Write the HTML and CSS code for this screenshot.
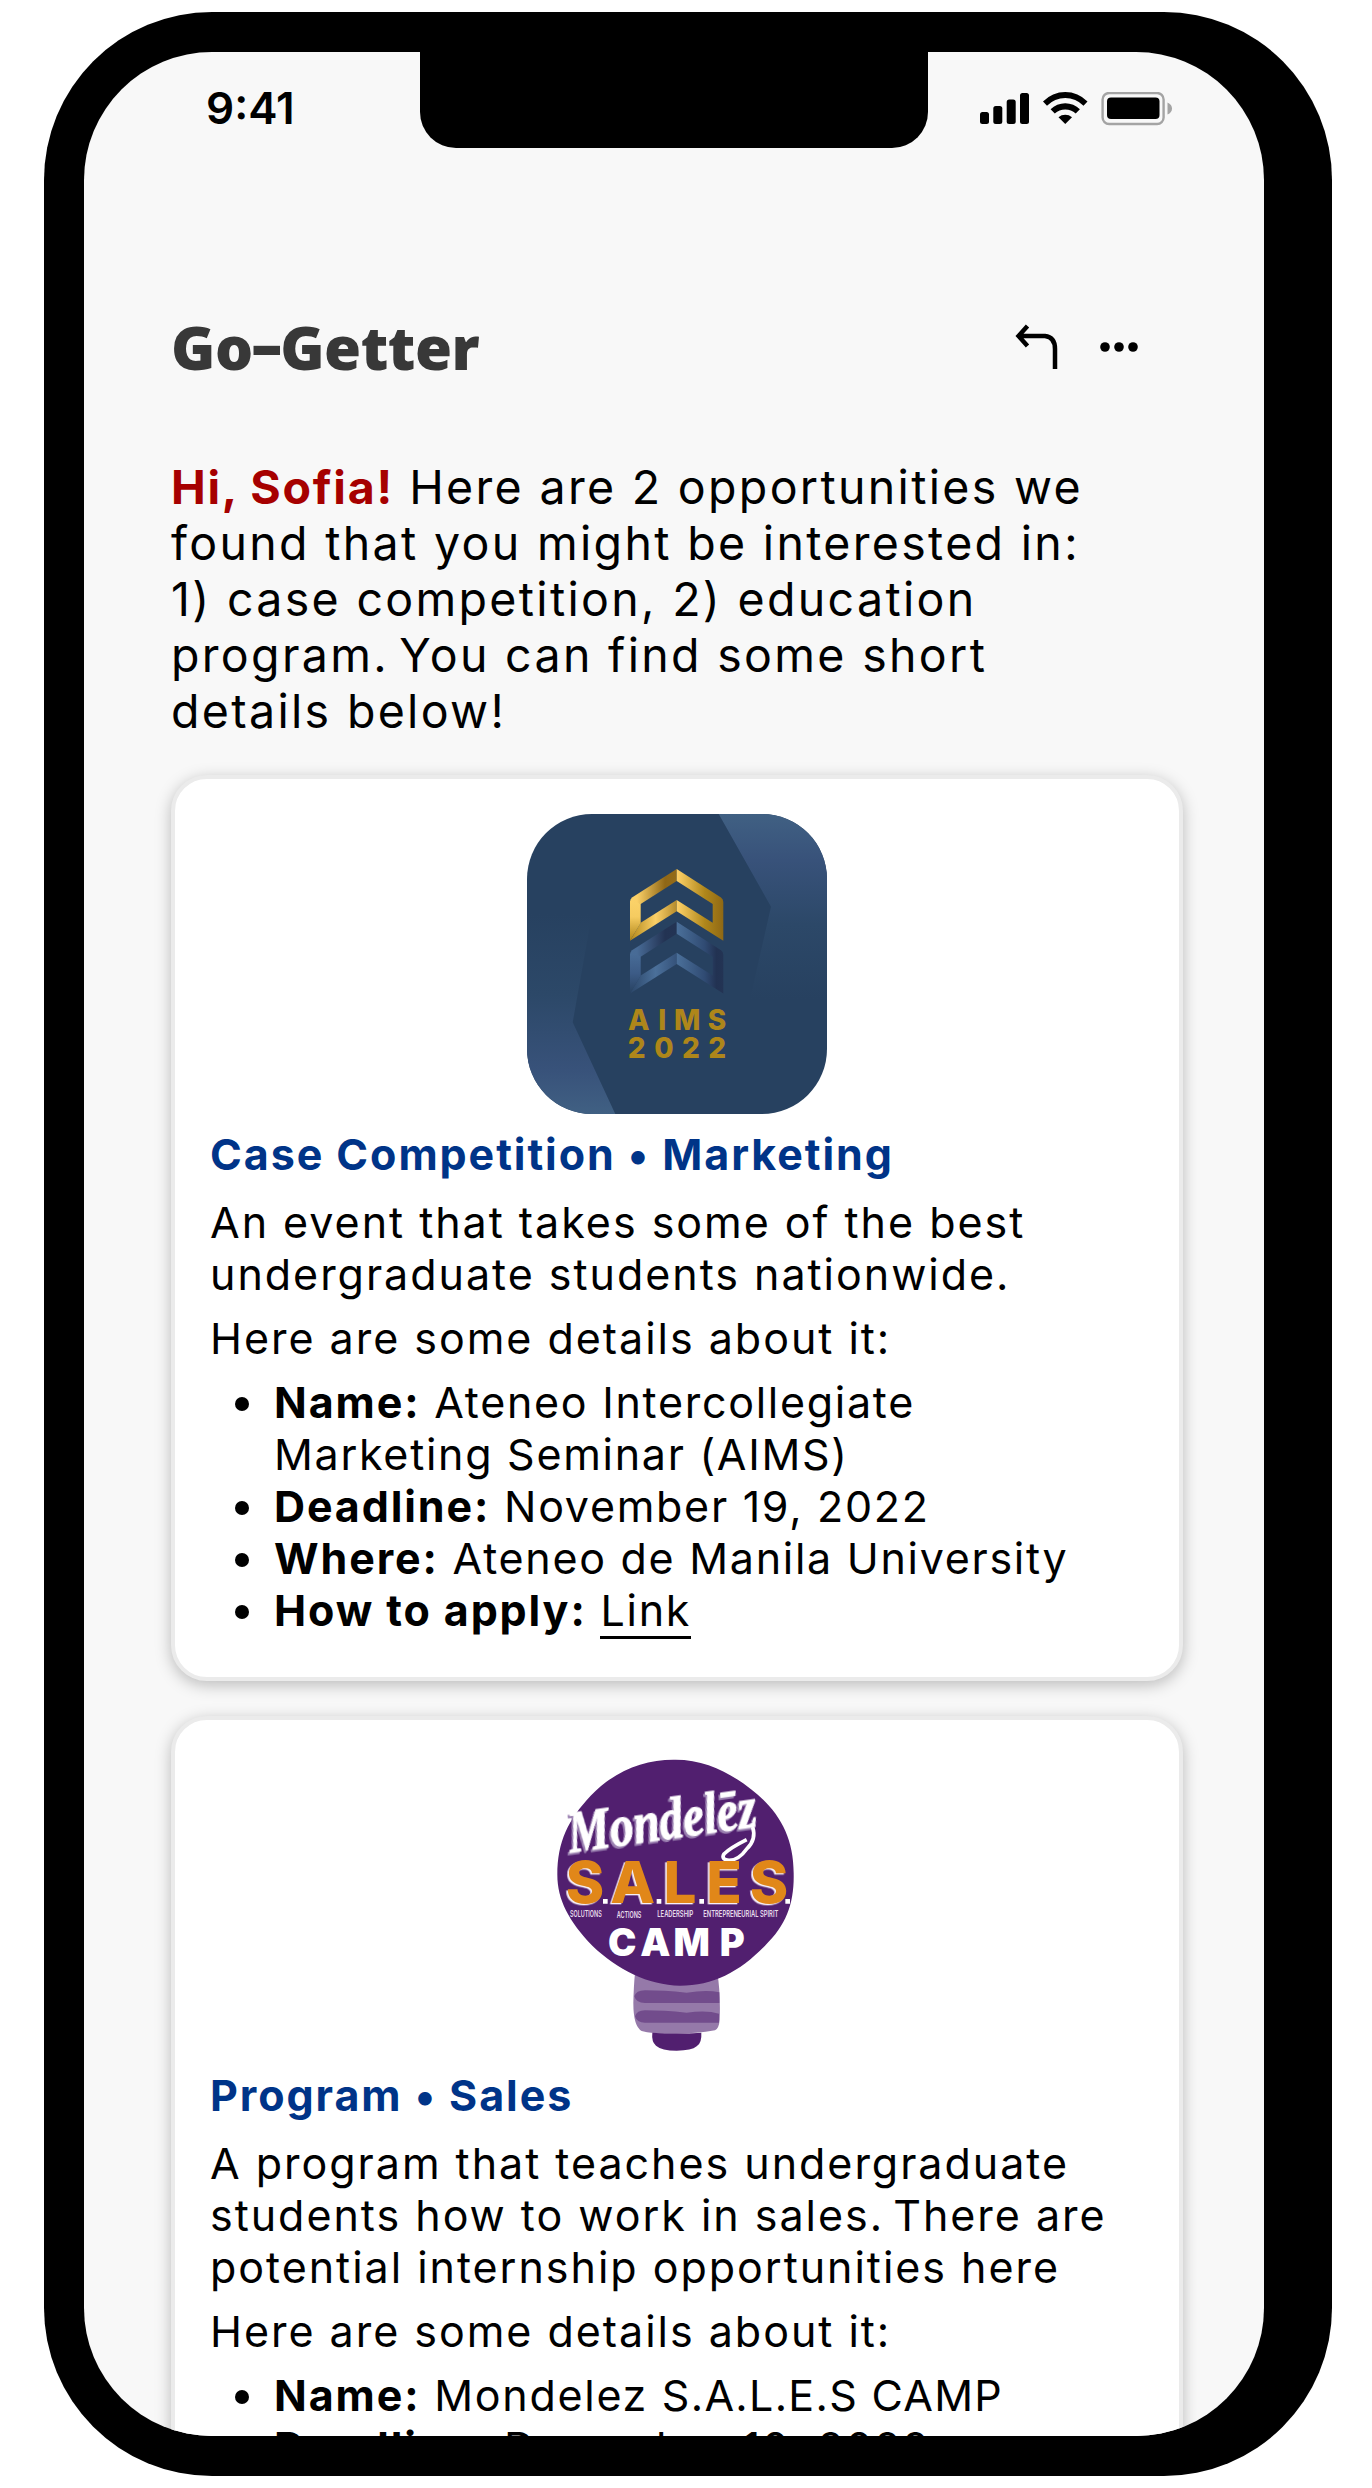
FILE: index.html
```html
<!DOCTYPE html>
<html lang="en">
<head>
<meta charset="utf-8">
<title>Go-Getter</title>
<link rel="stylesheet" href="styles.css">
</head>
<body>
<div class="phone">
  <div class="screen">
    <div class="status">
      <div class="time">9:41</div>
      <div class="notch"></div>
      <svg class="indicators" width="194" height="34" viewBox="0 0 194 34">
        <rect x="0" y="20" width="9" height="12" rx="2.5"/>
        <rect x="13.3" y="14" width="9" height="18" rx="2.5"/>
        <rect x="26.7" y="7.5" width="9" height="24.5" rx="2.5"/>
        <rect x="40" y="1" width="9" height="31" rx="2.5"/>
        <path d="M63 9.500a31 31 0 0 1 44.500 0l-4 4.200a25.500 25.500 0 0 0 -36.500 0z"/>
        <path d="M70.600 17.200a21 21 0 0 1 29.300 0l-4.200 4.300a15.500 15.500 0 0 0 -20.900 0z"/>
        <path d="M78.500 25.200a10.500 10.500 0 0 1 13.500 0l-6.750 6.800z"/>
        <rect x="122.600" y="1" width="61" height="31" rx="6.500" fill="none" stroke="#a4a4a4" stroke-width="2.400"/>
        <rect x="127" y="5.500" width="52.500" height="21.500" rx="4"/>
        <path d="M187.500 10.500q4.500 2 4.500 6t-4.500 6z" fill="#a4a4a4"/>
      </svg>
    </div>
    <header class="header">
      <h1 class="brand">Go<span class="dash">-</span>Getter</h1>
      <svg class="icon-back" width="44" height="46" viewBox="0 0 44 46" fill="none" stroke="#000" stroke-width="4.500"><path d="M12.500 2L3.500 12l9 10M4 12h26q10 1 10 13v20"/></svg>
      <svg class="icon-more" width="40" height="10" viewBox="0 0 40 10"><circle cx="6" cy="5" r="4.800"/><circle cx="20" cy="5" r="4.800"/><circle cx="34" cy="5" r="4.800"/></svg>
    </header>
    <p class="intro"><b class="greeting">Hi, Sofia!</b> Here are 2 opportunities we<br>found that you might be interested in:<br>1) case competition, 2) education<br>program.<span class="snug"> </span>You can find some short<br>details below!</p>

    <article class="card">
      <svg class="logo" width="300" height="300" viewBox="0 0 300 300">
        <defs>
          <clipPath id="tile"><rect width="300" height="300" rx="65"/></clipPath>
          <linearGradient id="fadeDown" x1="0" y1="0" x2="0" y2="1"><stop offset="0" stop-color="#406083"/><stop offset=".25" stop-color="#38527a"/><stop offset=".6" stop-color="#2c4868"/><stop offset="1" stop-color="#274160"/></linearGradient>
          <linearGradient id="fadeUp" x1="0" y1="1" x2="0" y2="0"><stop offset="0" stop-color="#406083"/><stop offset=".22" stop-color="#38527a"/><stop offset=".6" stop-color="#2c4868"/><stop offset="1" stop-color="#274160"/></linearGradient>
          <linearGradient id="gTop"><stop offset="0" stop-color="#fbd269"/><stop offset=".15" stop-color="#fbd067"/><stop offset=".75" stop-color="#906716"/><stop offset="1" stop-color="#936b19"/></linearGradient>
          <linearGradient id="gLow"><stop offset="0" stop-color="#b18719"/><stop offset=".55" stop-color="#fbd068"/><stop offset="1" stop-color="#b58b2c"/></linearGradient>
          <linearGradient id="gRight"><stop offset="0" stop-color="#ffd269"/><stop offset=".6" stop-color="#b0871b"/><stop offset="1" stop-color="#8f6814"/></linearGradient>
          <linearGradient id="gSide" x1="0" y1="0" x2="0" y2="1"><stop offset="0" stop-color="#fbd269"/><stop offset=".4" stop-color="#f5cb60"/><stop offset="1" stop-color="#ae8418"/></linearGradient>
          <linearGradient id="bTop"><stop offset="0" stop-color="#486c97"/><stop offset=".15" stop-color="#486b96"/><stop offset=".75" stop-color="#233353"/><stop offset="1" stop-color="#233454"/></linearGradient>
          <linearGradient id="bLow"><stop offset="0" stop-color="#2b4669"/><stop offset=".55" stop-color="#4b709a"/><stop offset="1" stop-color="#35527a"/></linearGradient>
          <linearGradient id="bRight"><stop offset="0" stop-color="#4b709a"/><stop offset=".6" stop-color="#304b73"/><stop offset=".85" stop-color="#223252"/><stop offset="1" stop-color="#233454"/></linearGradient>
          <linearGradient id="bSide" x1="0" y1="0" x2="0" y2="1"><stop offset="0" stop-color="#486c97"/><stop offset=".5" stop-color="#3c5b86"/><stop offset="1" stop-color="#274160"/></linearGradient>
        </defs>
        <g clip-path="url(#tile)">
          <rect width="300" height="300" fill="#274160"/>
          <path d="M191.700 0L244 92.700L223 185H300V0z" fill="url(#fadeDown)"/>
          <path d="M88.300 300L45.700 208.300L65 100H0V300z" fill="url(#fadeUp)"/>
        </g>
        <g transform="translate(0 52.700)">
          <path d="M149.700 55L105 83.500Q103 85 103 88L113.700 90L149.700 67z" fill="url(#bTop)"/>
          <path d="M103 126.700L149.700 97.300V86L113.700 108.700z" fill="url(#bLow)"/>
          <path d="M103 87L113.700 89.500V109L103 126.700z" fill="url(#bSide)"/>
          <path d="M149.700 55L194 83.500Q196.300 85 196.300 88V126.700L149.700 97.300V86L185.700 108.700V90L149.700 67z" fill="url(#bRight)"/>
        </g>
        <path d="M149.700 55L105 83.500Q103 85 103 88L113.700 90L149.700 67z" fill="url(#gTop)"/>
        <path d="M103 126.700L149.700 97.300V86L113.700 108.700z" fill="url(#gLow)"/>
        <path d="M103 87L113.700 89.500V109L103 126.700z" fill="url(#gSide)"/>
        <path d="M149.700 55L194 83.500Q196.300 85 196.300 88V126.700L149.700 97.300V86L185.700 108.700V90L149.700 67z" fill="url(#gRight)"/>
        <text class="aims" x="111.700 135.300 160.300 190" y="215.700">AIMS</text>
        <text class="aims" x="109.700 137 164 190.300" y="243.700">2022</text>
      </svg>
      <h2 class="title">Case Competition • Marketing</h2>
      <p class="text">An event that takes some of the best<br>undergraduate students nationwide.</p>
      <p class="text">Here are some details about it:</p>
      <ul class="details">
        <li><b>Name:</b> Ateneo Intercollegiate<br>Marketing Seminar (AIMS)</li>
        <li><b>Deadline:</b> November 19, 2022</li>
        <li><b>Where:</b> Ateneo de Manila University</li>
        <li><b>How to apply:</b> <a class="link" href="#">Link</a></li>
      </ul>
    </article>

    <article class="card">
      <svg class="logo" width="300" height="300" viewBox="-9 46 900 900">
        <path d="M315 700H562Q572 760 569 840Q567 866 555 872Q500 882 440 882Q370 884 335 874Q310 860 310 790Q311 740 315 700z" fill="#9579a9"/>
        <path d="M313 770Q318 752 345 752Q400 752 470 759Q530 750 568 758V790H345Q318 790 313 770zM315 830Q320 812 345 812Q400 812 470 819Q530 810 567 822V849H345Q320 849 315 830z" fill="#724c8c"/>
        <path d="M367 879Q440 884 514 879Q516 910 500 920Q485 933 440 933Q395 933 378 918Q364 906 367 879z" fill="#511f6f"/>
        <path d="M430 60C520 58 595 95 665 150C745 212 791 290 791 400C793 490 770 555 705 618C630 695 550 738 450 738C355 736 262 690 187 618C117 545 82 480 82 405C82 305 115 240 182 168C255 93 340 60 430 60z" fill="#511f6f"/>
        <text class="script" transform="rotate(-8 120 345)" x="122" y="340" textLength="570" lengthAdjust="spacingAndGlyphs">Mondelēz</text>
        <path d="M668 262Q680 300 650 328Q626 362 597 362Q572 360 582 343Q600 325 650 300" fill="none" stroke="#fff" stroke-width="11"/>
        <text class="sales" x="165 308 450 582 717" y="490">SALES</text>
        <path d="M219 478h14v14h-14zM380 478h14v14h-14zM508 478h14v14h-14zM766 478h14v14h-14z" fill="#fff"/>
        <g class="tiny">
          <text x="120" y="533" textLength="95" lengthAdjust="spacingAndGlyphs">SOLUTIONS</text>
          <text x="260" y="534" textLength="74" lengthAdjust="spacingAndGlyphs">ACTIONS</text>
          <text x="382" y="533" textLength="108" lengthAdjust="spacingAndGlyphs">LEADERSHIP</text>
          <text x="520" y="533" textLength="225" lengthAdjust="spacingAndGlyphs">ENTREPRENEURIAL SPIRIT</text>
        </g>
        <text class="camp" x="277 376 485 607" y="650">CAMP</text>
      </svg>
      <h2 class="title">Program • Sales</h2>
      <p class="text">A program that teaches undergraduate<br>students how to work in sales.<span class="snug"> </span>There are<br>potential internship opportunities here</p>
      <p class="text">Here are some details about it:</p>
      <ul class="details">
        <li><b>Name:</b> Mondelez <span class="acronym">S.A.L.E.S CAMP</span></li>
        <li><b>Deadline:</b> December 10, 2022</li>
      </ul>
    </article>
  </div>
</div>
</body>
</html>
```
FILE: styles.css
```css
* { box-sizing: border-box; }
body {
  margin: 0;
  height: 2488px;
  padding: 12px 0 0 44px;
  overflow: hidden;
  background: #fff;
  color: #000;
  font-family: Inter, "Liberation Sans", sans-serif;
  text-rendering: optimizeLegibility;
}
.phone {
  width: 1288px;
  height: 2464px;
  padding: 40px 68px 40px 40px;
  border-radius: 168px;
  background: #000;
}
.screen {
  width: 1180px;
  height: 2384px;
  border-radius: 128px;
  background: #f8f8f8;
  overflow: hidden;
}
.status { display: flex; height: 96px; }
.time {
  width: 336px;
  padding-left: 122px;
  font-size: 44px;
  font-weight: 600;
  line-height: 113px;
}
.notch {
  width: 508px;
  background: #000;
  border-radius: 0 0 36px 36px;
}
.indicators { margin: 40px 0 0 52px; }
.header {
  display: flex;
  align-items: center;
  height: 90px;
  margin: 154px 79px 0 87px;
}
.brand {
  flex: 1;
  margin: 0;
  color: #383838;
  font-family: "Noto Sans", sans-serif;
  font-size: 60px;
  font-weight: 900;
  line-height: 90px;
  letter-spacing: -.5px;
}
.dash {
  display: inline-block;
  margin: 0 4.500px;
  transform: translateY(-3px) scaleX(1.6);
}
.icon-back { margin-right: 40px; }
.icon-more { margin-right: 46px; }
.intro {
  margin: 67px 0 0 87px;
  font-size: 46.500px;
  line-height: 56px;
  letter-spacing: .05em;
  white-space: nowrap;
}
.greeting { color: #a60000; letter-spacing: .037em; }
.snug { word-spacing: -5px; }
.card {
  width: 1012px;
  height: 906px;
  margin: 35px 0 0 87px;
  padding: 35px;
  border: 4px solid #ebebeb;
  border-radius: 36px;
  background: #fff;
  box-shadow: 0 4px 16px rgba(0, 0, 0, .25);
  font-size: 43px;
  line-height: 52px;
  letter-spacing: .046em;
  white-space: nowrap;
}
.intro + .card { margin-top: 36px; }
.logo { display: block; margin: 0 auto; }
.title {
  margin: 14px 0 16px;
  color: #003488;
  font-size: 43px;
  font-weight: 700;
  letter-spacing: .045em;
}
.text { margin: 0 0 12px; }
.details {
  margin: 0;
  padding-left: 60px;
  letter-spacing: .04em;
}
.details li { padding-left: 4px; }
.details b { letter-spacing: .044em; }
.acronym { letter-spacing: .03em; }
.link {
  color: inherit;
  text-decoration: none;
  border-bottom: 3px solid #000;
}
.aims {
  fill: #ae861a;
  font-size: 28px;
  font-weight: 800;
  letter-spacing: 0;
  text-anchor: middle;
}
.script {
  fill: #fff;
  stroke: #fff;
  stroke-width: 3px;
  font-family: "Liberation Serif", serif;
  font-size: 175px;
  font-style: italic;
  font-weight: 700;
  letter-spacing: 0;
  filter: drop-shadow(-6px 6px 0 #9a80b0);
}
.sales {
  fill: #e18719;
  font-size: 175px;
  font-weight: 800;
  letter-spacing: 0;
  text-anchor: middle;
  filter: drop-shadow(-5px 4px 0 #f6eef6);
}
.tiny text {
  fill: #e7dcec;
  font-size: 28px;
  font-weight: 600;
  letter-spacing: 0;
}
.camp {
  fill: #fff;
  font-size: 114px;
  font-weight: 900;
  letter-spacing: 0;
  text-anchor: middle;
}
```
